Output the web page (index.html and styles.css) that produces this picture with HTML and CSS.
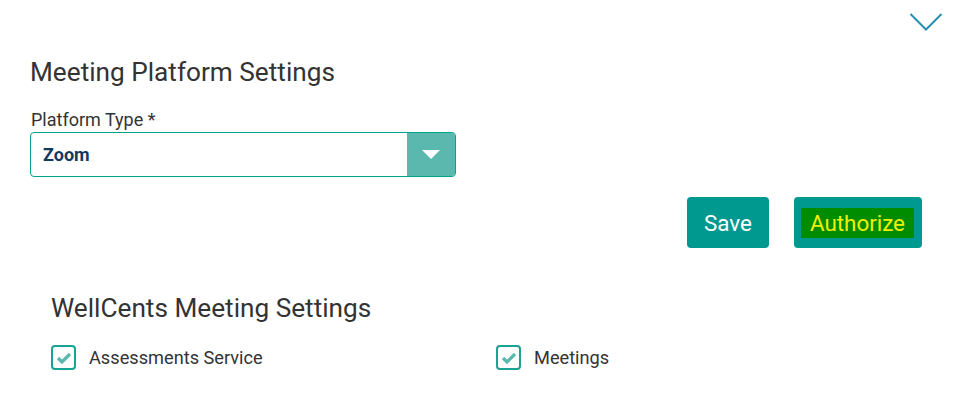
FILE: index.html
```html
<!DOCTYPE html>
<html>
<head>
<meta charset="utf-8">
<link rel="stylesheet" href="styles.css">
</head>
<body>
<div class="page">
  <div class="topbar">
    <svg class="chevron" width="34" height="20" viewBox="0 0 34 20"><path d="M1.5 2 L17 17.5 L32.5 2" fill="none" stroke="#2590b0" stroke-width="2"/></svg>
  </div>
  <h2 class="title">Meeting Platform Settings</h2>
  <label class="field-label">Platform Type *</label>
  <div class="select">
    <div class="select-value">Zoom</div>
    <div class="select-btn"><span class="tri"></span></div>
  </div>
  <div class="actions">
    <button class="btn">Save</button>
    <button class="btn btn-auth"><span class="hl">Authorize</span></button>
  </div>
  <div class="section">
    <h2 class="title">WellCents Meeting Settings</h2>
    <div class="checks">
      <div class="check">
        <span class="box"><svg width="16" height="12" viewBox="0 0 16 12"><path d="M2 6 L6 10 L14 2" fill="none" stroke="#5bb8ae" stroke-width="3.2"/></svg></span>
        <span class="check-label">Assessments Service</span>
      </div>
      <div class="check">
        <span class="box"><svg width="16" height="12" viewBox="0 0 16 12"><path d="M2 6 L6 10 L14 2" fill="none" stroke="#5bb8ae" stroke-width="3.2"/></svg></span>
        <span class="check-label">Meetings</span>
      </div>
    </div>
  </div>
</div>
</body>
</html>
```
FILE: styles.css
```css
html, body { margin: 0; padding: 0; background: #fff; }
body { font-family: Roboto, "Liberation Sans", sans-serif; color: #333; }
.page { width: 960px; height: 408px; box-sizing: border-box; padding: 0 30px; overflow: hidden; }
.topbar { display: flex; justify-content: flex-end; height: 56px; padding-top: 12px; box-sizing: border-box; margin-right: -13px; }
.chevron { display: block; }
.title { margin: 0; font-weight: 400; font-size: 26.2px; line-height: 32px; color: #333; }
.field-label { display: block; margin-top: 21px; font-size: 18px; line-height: 22px; padding-left: 1px; }
.select { display: flex; width: 426px; height: 45px; box-sizing: border-box; border: 1px solid #00a38f; border-radius: 4px; overflow: hidden; margin-top: 1px; }
.select-value { flex: 1; display: flex; align-items: center; padding-left: 12px; font-weight: 700; font-size: 18px; color: #0f3b5f; }
.select-btn { width: 48px; background: #5bb8ae; display: flex; align-items: center; justify-content: center; }
.tri { width: 0; height: 0; border-left: 9px solid transparent; border-right: 9px solid transparent; border-top: 9px solid #fff; }
.actions { display: flex; justify-content: flex-end; gap: 25px; margin-top: 20px; padding-right: 8px; }
.btn { font-family: Roboto, "Liberation Sans", sans-serif; font-size: 22.4px; color: #fff; background: #009990; border: none; border-radius: 4px; height: 51px; padding: 0 17px; }
.btn-auth { padding: 0 8px 0 7px; }
.hl { display: inline-block; background: #008c00; color: #f0f000; padding: 1px 9px; line-height: 28px; }
.section { padding-left: 21px; margin-top: 44px; }
.checks { display: flex; margin-top: 21px; }
.check { display: flex; align-items: center; width: 445px; flex-shrink: 0; }
.box { width: 25px; height: 25px; box-sizing: border-box; border: 2px solid #1aa392; border-radius: 4px; display: flex; align-items: center; justify-content: center; margin-right: 13px; }
.check-label { font-size: 18.2px; color: #333; }
```
